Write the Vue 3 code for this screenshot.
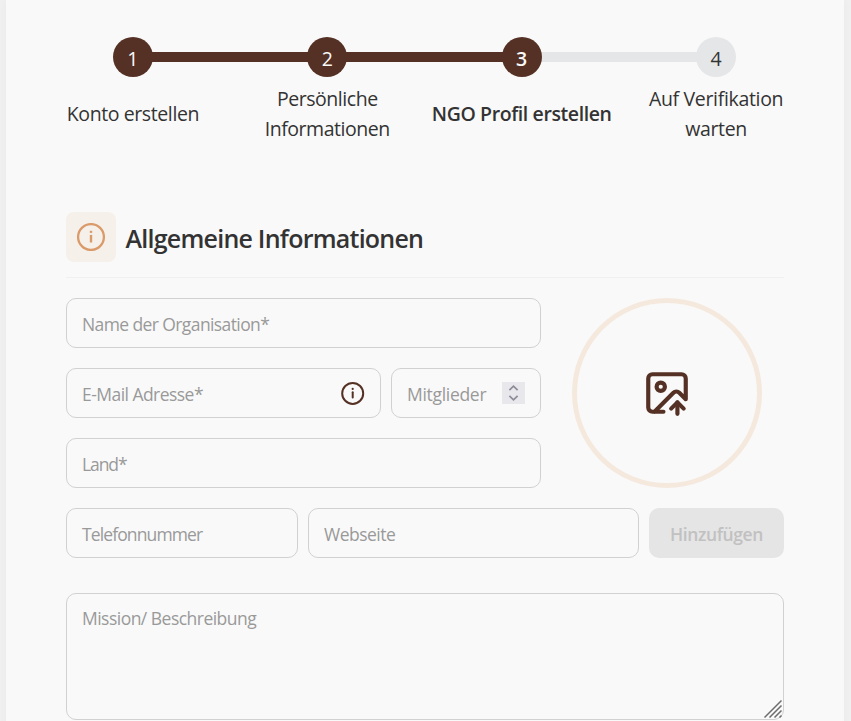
<script setup>
const steps = [
  { label: 'Konto erstellen', cls: 'k1', before: '', after: 'done', state: 'done' },
  { label: 'Persönliche Informationen', cls: 'k2', before: 'done', after: 'done', state: 'done' },
  { label: 'NGO Profil erstellen', cls: 'k3', before: 'done', after: 'open', state: 'done current' },
  { label: 'Auf Verifikation warten', cls: 'k4', before: 'open', after: '', state: 'open' },
]
</script>

<template>
  <div class="page">
    <main class="card">
      <ol class="steps">
        <li v-for="(step, i) in steps" :key="step.label" class="step">
          <div class="track">
            <span class="line" :class="step.before"></span>
            <span class="dot" :class="step.state"><span class="num">{{ i + 1 }}</span></span>
            <span class="line" :class="step.after"></span>
          </div>
          <div class="label" :class="[step.cls, { bold: i === 2 }]"><span>{{ step.label }}</span></div>
        </li>
      </ol>

      <header class="head">
        <span class="badge">
          <svg width="28" height="28" viewBox="0 0 28 28" fill="none" stroke="#db9a6a">
            <circle cx="14" cy="14" r="12.9" stroke-width="2.3" />
            <path d="M14 11.9v7.6" stroke-width="2.4" />
            <path d="M14 7.8v2.1" stroke-width="2.4" />
          </svg>
        </span>
        <h2><span>Allgemeine Informationen</span></h2>
      </header>

      <section class="top">
        <div class="fields">
          <div class="field"><span class="ph p1">Name der Organisation*</span></div>
          <div class="row">
            <div class="field mail">
              <span class="ph p2">E-Mail Adresse*</span>
              <svg width="24" height="24" viewBox="0 0 24 24" fill="none" stroke="#553125">
                <circle cx="11.7" cy="12.4" r="10.5" stroke-width="2" />
                <path d="M11.7 11.2v5.4" stroke-width="2" stroke-linecap="round" />
                <path d="M11.7 7.9v.1" stroke-width="2.2" stroke-linecap="round" />
              </svg>
            </div>
            <div class="field members">
              <span class="ph p3">Mitglieder</span>
              <span class="spinner">
                <svg width="23" height="22" viewBox="0 0 23 22" fill="none" stroke="#8e8c98" stroke-width="1.7">
                  <path d="M7.4 8.2l4.1-4 4.1 4M7.4 13.8l4.1 4 4.1-4" />
                </svg>
              </span>
            </div>
          </div>
          <div class="field"><span class="ph p4">Land*</span></div>
        </div>
        <div class="upload">
          <div class="ring">
            <svg width="50" height="50" viewBox="0 0 24 24" fill="none" stroke="#553125" stroke-width="2" stroke-linecap="round" stroke-linejoin="round">
              <path d="M10.3 21H5a2 2 0 0 1-2-2V5a2 2 0 0 1 2-2h14a2 2 0 0 1 2 2v10l-3.1-3.1a2 2 0 0 0-2.814.014L6 21" />
              <path d="m14 19.5 3-3 3 3" />
              <path d="M17 22v-5.5" />
              <circle cx="9" cy="9" r="2" />
            </svg>
          </div>
        </div>
      </section>

      <section class="row contact">
        <div class="field phone"><span class="ph p5">Telefonnummer</span></div>
        <div class="field web"><span class="ph p6">Webseite</span></div>
        <button class="add" disabled><span>Hinzufügen</span></button>
      </section>

      <section class="field area">
        <span class="ph p7">Mission/ Beschreibung</span>
        <svg class="grip" width="20" height="20" viewBox="0 0 20 20" fill="none" stroke="#6d6d6d" stroke-width="1.5">
          <path d="M1.5 18.5l17-17M6.5 18.5l12-12M11.5 18.5l7-7M16.5 18.5l2-2" />
        </svg>
      </section>
    </main>
  </div>
</template>

<style>
body {
  background: #f1f1f1;
  overflow: hidden;
}
</style>

<style scoped>
* {
  box-sizing: border-box;
}
.page {
  height: 721px;
  padding: 0 7px 0 6px;
  overflow: hidden;
  font-family: "Segoe UI", "Open Sans", "Noto Sans", sans-serif;
  color: #333;
  background: #f0f0f0;
}
.card {
  height: 760px;
  padding: 37px 60px 0;
  background: #f9f9f9;
  box-shadow: 0 0 8px rgba(0, 0, 0, 0.03);
}
.steps {
  display: grid;
  grid-template-columns: repeat(4, 194.4px);
  margin: 0 -30.3px;
  padding: 0;
  list-style: none;
}
.track {
  display: flex;
  align-items: center;
  height: 40px;
}
.line {
  flex: 1;
  height: 10px;
  margin: 0 -2px;
}
.line.done {
  background: #553125;
}
.line.open {
  background: #e5e6e8;
}
.dot {
  position: relative;
  z-index: 1;
  display: flex;
  align-items: center;
  justify-content: center;
  width: 40px;
  height: 40px;
  border-radius: 50%;
  font-size: 19.5px;
  line-height: 30px;
}
.num {
  padding-top: 3px;
}
.dot.done {
  background: #553125;
  color: #f9f9f9;
}
.dot.open {
  background: #e5e6e8;
}
.dot.current {
  font-weight: 600;
}
.label {
  display: flex;
  align-items: center;
  justify-content: center;
  width: 150px;
  height: 60px;
  margin: 7px auto 0;
  font-size: 19.5px;
  letter-spacing: -0.4px;
  line-height: 30px;
  text-align: center;
}
.k1,
.k3 {
  white-space: nowrap;
}
.k2 {
  letter-spacing: -0.45px;
}
.k4 {
  letter-spacing: -0.33px;
}
.bold {
  font-weight: 600;
}
.head {
  display: flex;
  gap: 9.5px;
  height: 66px;
  margin-top: 68px;
  border-bottom: 1px solid #f0f0f0;
}
.badge {
  display: flex;
  align-items: center;
  justify-content: center;
  width: 50px;
  height: 50px;
  border-radius: 8px;
  background: #f5f0ea;
}
h2 {
  margin: 0;
  padding-top: 1px;
  font-size: 25px;
  font-weight: 600;
  letter-spacing: -0.76px;
  line-height: 50px;
  white-space: nowrap;
}
.top {
  display: flex;
  gap: 10px;
  margin-top: 20px;
}
.fields {
  display: flex;
  flex-direction: column;
  gap: 20px;
  width: 475px;
}
.row {
  display: flex;
  gap: 10px;
}
.field {
  display: flex;
  align-items: center;
  justify-content: space-between;
  height: 50px;
  padding: 0 15px;
  border: 1px solid #d1d1d1;
  border-radius: 10px;
}
.ph {
  padding-top: 1px;
  font-size: 17.5px;
  line-height: 24px;
  letter-spacing: -0.6px;
  color: #999;
  white-space: nowrap;
}
.p2 {
  letter-spacing: -0.54px;
}
.p3 {
  letter-spacing: -0.3px;
}
.p4 {
  letter-spacing: -1.1px;
}
.p5 {
  letter-spacing: -0.88px;
}
.p6 {
  letter-spacing: -0.5px;
}
.p7 {
  letter-spacing: -0.52px;
}
.mail {
  width: 315px;
}
.members {
  flex: 1;
}
.spinner {
  display: flex;
  width: 23px;
  height: 22px;
  background: #e8e7ec;
}
.upload {
  display: flex;
  flex: 1;
  justify-content: center;
  padding-right: 2px;
}
.ring {
  display: flex;
  align-items: center;
  justify-content: center;
  width: 190px;
  height: 190px;
  border: 5px solid #f5e9de;
  border-radius: 50%;
}
.contact {
  margin-top: 20px;
}
.phone {
  width: 232px;
}
.web {
  width: 331px;
}
.add {
  width: 135px;
  padding: 2px 0 0;
  border: 0;
  border-radius: 10px;
  background: #e5e5e5;
  color: #c1c1c1;
  font-family: inherit;
  font-size: 17.5px;
  font-weight: 600;
  letter-spacing: -0.4px;
}
.area {
  position: relative;
  align-items: flex-start;
  height: 127px;
  margin-top: 35px;
  padding-top: 11px;
}
.grip {
  position: absolute;
  right: 0;
  bottom: 0;
}
</style>
